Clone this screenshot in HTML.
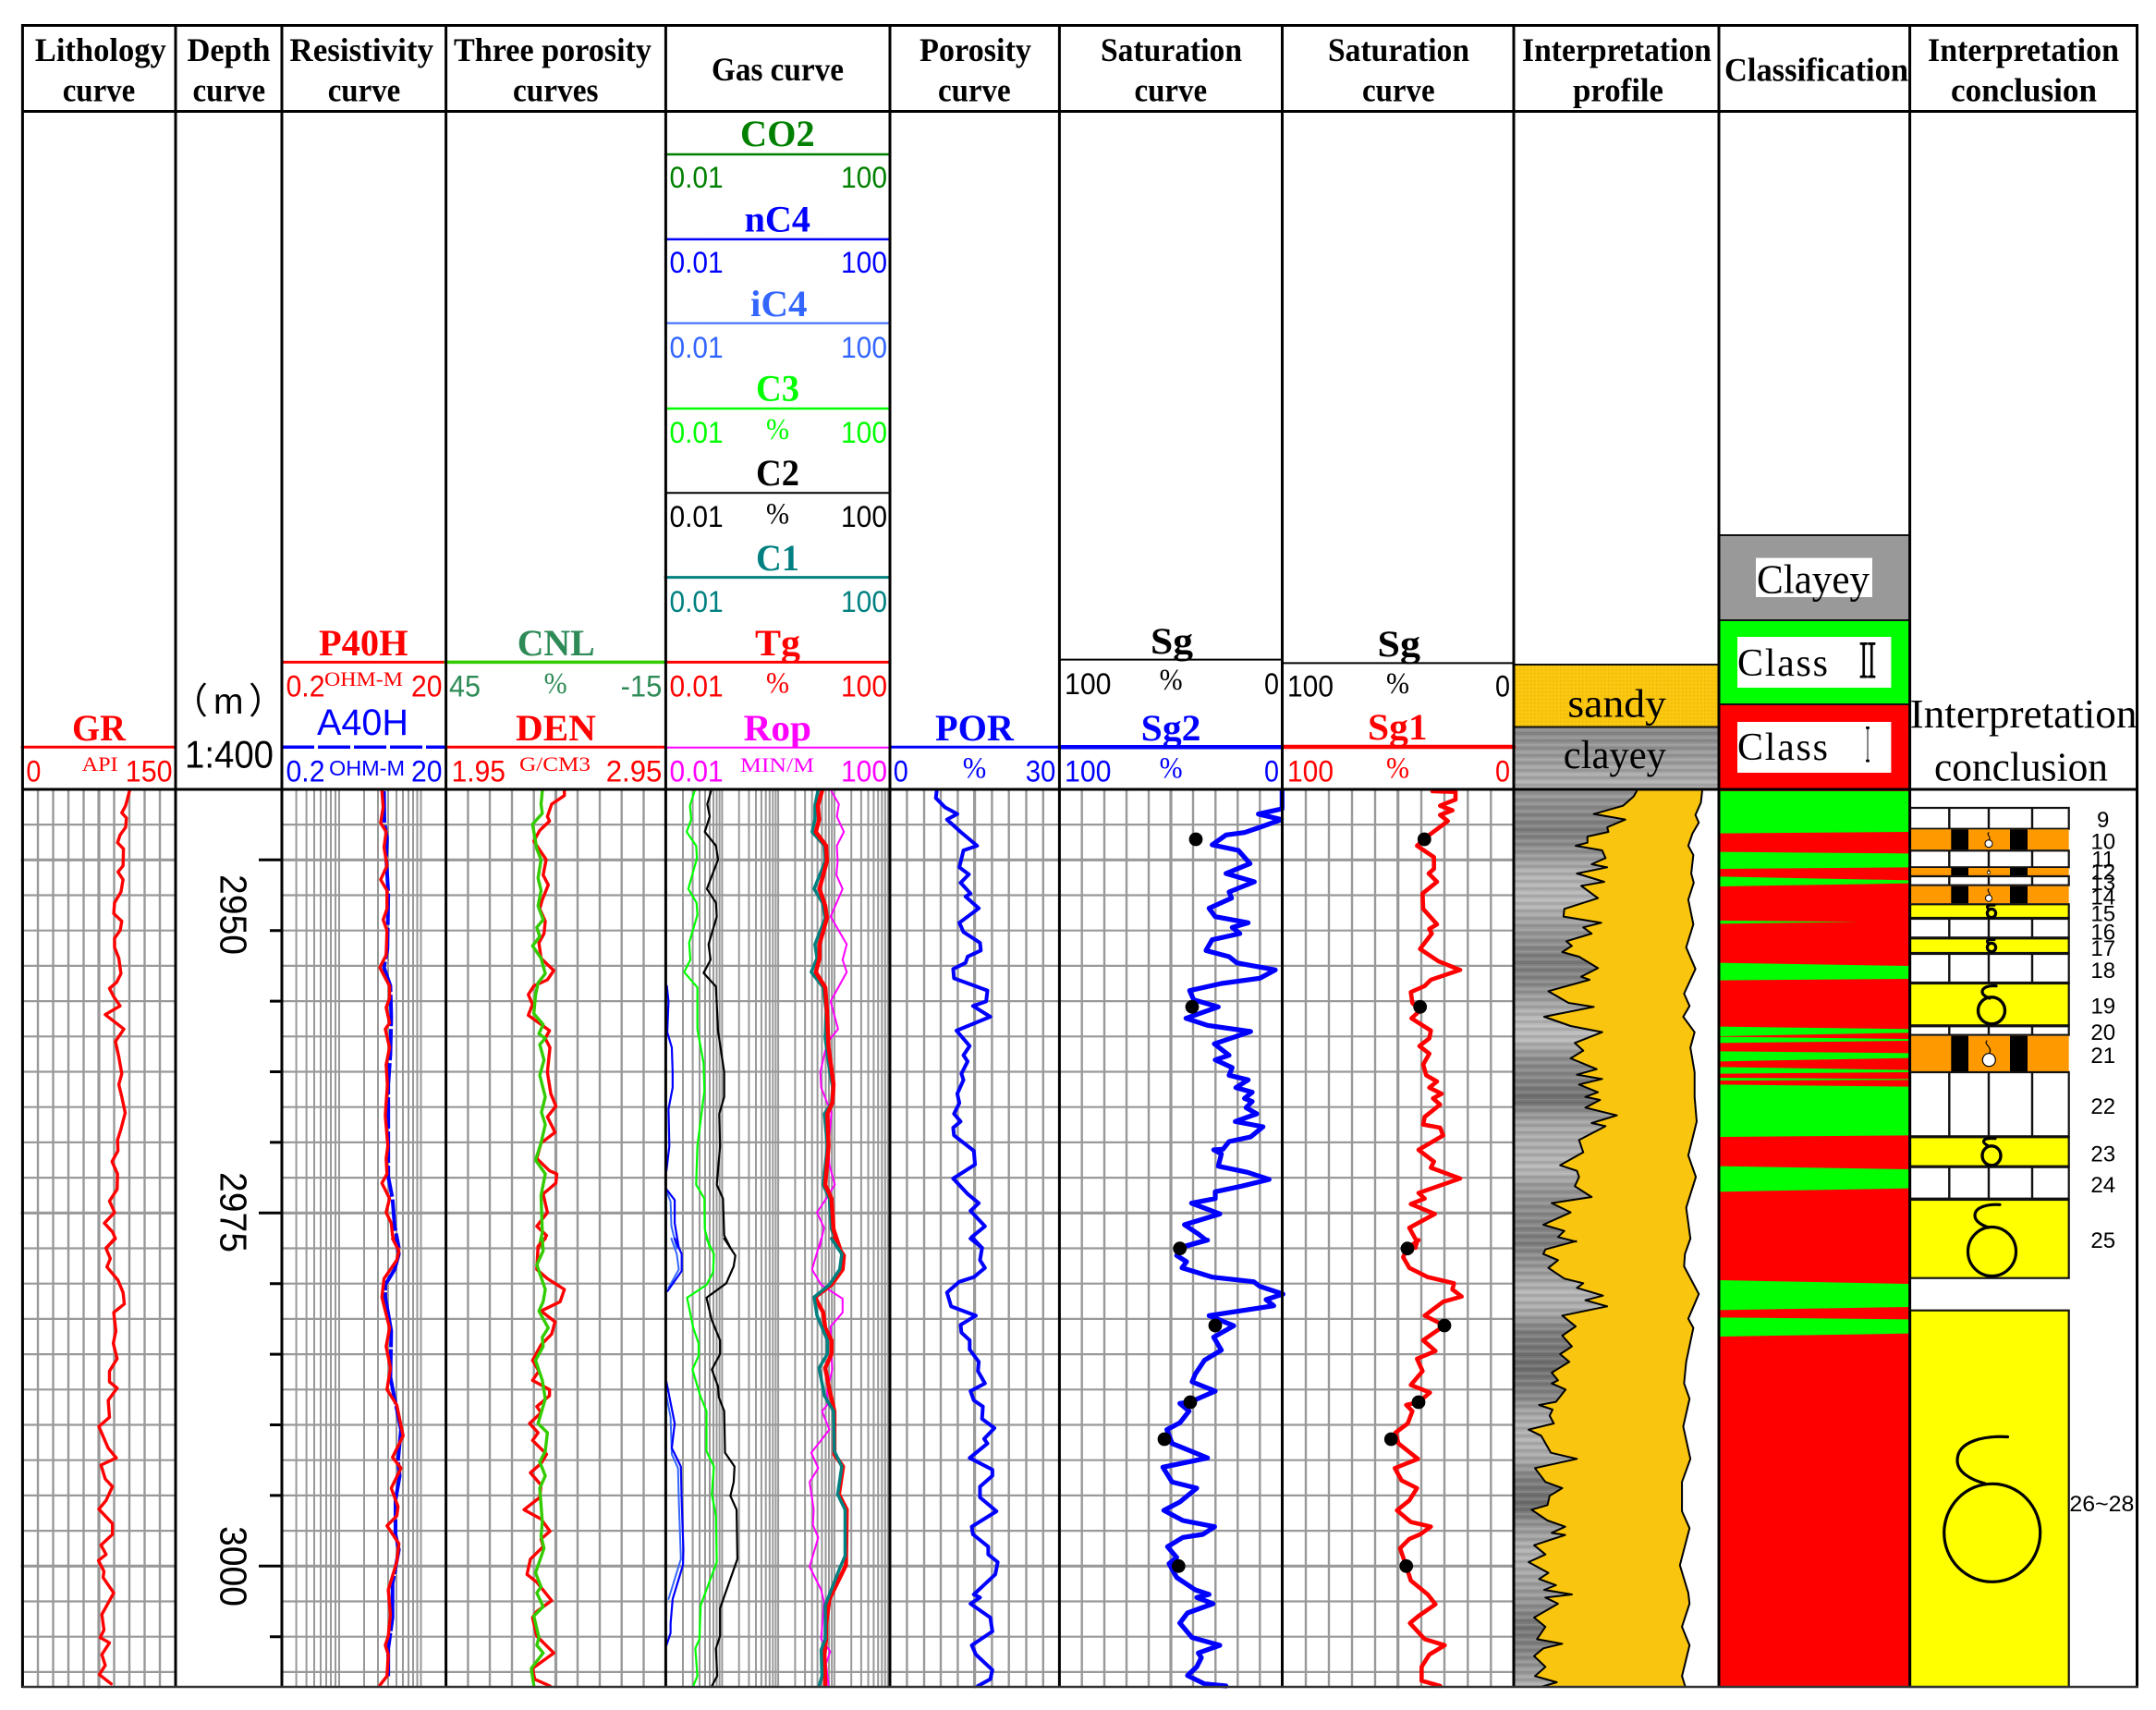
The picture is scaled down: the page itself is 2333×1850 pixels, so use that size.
<!DOCTYPE html>
<html><head><meta charset="utf-8"><style>
html,body{margin:0;padding:0;background:#fff}
svg{display:block}
text{white-space:pre}
.h{font:bold 35.5px "Liberation Serif",serif}
.l{font:bold 40px "Liberation Serif",serif}
.n{font:32.5px "Liberation Sans",sans-serif}
.u{font:22px "Liberation Serif",serif}
.p{font:33px "Liberation Serif",serif}
.c{font:24px "Liberation Sans",sans-serif;text-anchor:middle}
.i{font:44px "Liberation Serif",serif}
path{vector-effect:non-scaling-stroke;stroke-linejoin:round;stroke-linecap:round}
.cv{fill:none}
</style></head><body>
<svg xmlns="http://www.w3.org/2000/svg" width="2333" height="1850" viewBox="0 0 2333 1850">
<defs>
<linearGradient id="g2" gradientUnits="userSpaceOnUse" x1="0" y1="0" x2="0" y2="2000">
<stop offset=".427" stop-color="#9a9a9a"/><stop offset=".44" stop-color="#8a8a8a"/><stop offset=".45" stop-color="#808080"/><stop offset=".4625" stop-color="#999"/><stop offset=".4725" stop-color="#b4b4b4"/><stop offset=".49" stop-color="#b8b8b8"/><stop offset=".495" stop-color="#a8a8a8"/><stop offset=".51" stop-color="#909090"/><stop offset=".52" stop-color="#7e7e7e"/><stop offset=".53" stop-color="#888"/><stop offset=".5425" stop-color="#a5a5a5"/><stop offset=".55" stop-color="#b8b8b8"/><stop offset=".5625" stop-color="#bbb"/><stop offset=".5725" stop-color="#909090"/><stop offset=".585" stop-color="#858585"/><stop offset=".595" stop-color="#707070"/><stop offset=".6" stop-color="#8c8c8c"/><stop offset=".6075" stop-color="#a8a8a8"/><stop offset=".62" stop-color="#b0b0b0"/><stop offset=".6325" stop-color="#b8b8b8"/><stop offset=".6425" stop-color="#9a9a9a"/><stop offset=".66" stop-color="#888"/><stop offset=".6725" stop-color="#808080"/><stop offset=".685" stop-color="#999"/><stop offset=".7" stop-color="#b8b8b8"/><stop offset=".71" stop-color="#aaa"/><stop offset=".72" stop-color="#808080"/><stop offset=".74" stop-color="#707070"/><stop offset=".755" stop-color="#888"/><stop offset=".765" stop-color="#aaa"/><stop offset=".78" stop-color="#b4b4b4"/><stop offset=".79" stop-color="#a8a8a8"/><stop offset=".8" stop-color="#808080"/><stop offset=".815" stop-color="#6e6e6e"/><stop offset=".825" stop-color="#999"/><stop offset=".84" stop-color="#b4b4b4"/><stop offset=".85" stop-color="#aaa"/><stop offset=".865" stop-color="#999"/><stop offset=".88" stop-color="#777"/><stop offset=".895" stop-color="#8a8a8a"/><stop offset=".9125" stop-color="#b0b0b0"/>
</linearGradient>
<linearGradient id="g3" gradientUnits="userSpaceOnUse" x1="0" y1="787" x2="0" y2="854">
<stop offset="0" stop-color="#8a8a8a"/><stop offset=".4" stop-color="#9a9a9a"/><stop offset="1" stop-color="#b4b4b4"/>
</linearGradient>
<pattern id="st" width="10" height="8" patternUnits="userSpaceOnUse"><rect width="10" height="3" fill="#000" opacity=".09"/><rect y="5" width="10" height="1.5" fill="#fff" opacity=".12"/></pattern>
<pattern id="yl" width="4" height="4" patternUnits="userSpaceOnUse"><rect width="4" height="4" fill="#fcc80e"/><rect width="1.5" height="1.5" fill="#d8a60c"/></pattern>
</defs>

<rect width="2333" height="1850" fill="#fff"/>

<!-- grid -->
<path fill="none" stroke="#999" stroke-width="2.2" d="M24 892.1H1638M24 968.5H1638M24 1006.7H1638M24 1044.9H1638M24 1083.1H1638M24 1121.3H1638M24 1159.5H1638M24 1197.7H1638M24 1235.9H1638M24 1274.1H1638M24 1350.5H1638M24 1388.7H1638M24 1426.9H1638M24 1465.1H1638M24 1503.3H1638M24 1541.5H1638M24 1579.7H1638M24 1617.9H1638M24 1656.1H1638M24 1732.5H1638M24 1770.7H1638M24 1808.9H1638"/>
<path fill="none" stroke="#999" stroke-width="3.2" d="M24 930.3H1638M24 1312.3H1638M24 1694.3H1638"/>
<rect x="190" y="855" width="115" height="970" fill="#fff"/>
<path fill="none" stroke="#999" stroke-width="2.4" d="M41 854V1825M57.5 854V1825M74 854V1825M90.5 854V1825M123.5 854V1825M140 854V1825M156.5 854V1825M173 854V1825
M506.4 854V1825M530 854V1825M554 854V1825M577.7 854V1825M625 854V1825M649 854V1825M672.7 854V1825M696.5 854V1825
M981.4 854V1825M1000 854V1825M1018 854V1825M1036.4 854V1825M1073.4 854V1825M1091.7 854V1825M1110.5 854V1825M1128.8 854V1825
M1170.7 854V1825M1195 854V1825M1219 854V1825M1243 854V1825M1291 854V1825M1315.3 854V1825M1339.3 854V1825M1363.3 854V1825
M1413 854V1825M1438 854V1825M1463 854V1825M1488 854V1825M1538 854V1825M1563 854V1825M1588.3 854V1825M1613.3 854V1825"/>
<path fill="none" stroke="#999" stroke-width="3.2" d="M107 854V1825M601.5 854V1825M1054.6 854V1825M1267 854V1825M1512.7 854V1825"/>
<path fill="none" stroke="#999" stroke-width="2" d="M320.6 854V1825M331.6 854V1825M340 854V1825M347 854V1825M353 854V1825M358 854V1825M363 854V1825M367 854V1825M394 854V1825M409 854V1825M420 854V1825M429 854V1825M436 854V1825M442 854V1825M447 854V1825M451.5 854V1825M455.5 854V1825
M739 854V1825M749.6 854V1825M757 854V1825M763 854V1825M768 854V1825M772 854V1825M775.5 854V1825M778.6 854V1825M781.4 854V1825M799.7 854V1825M810.4 854V1825M818 854V1825M823.9 854V1825M828.7 854V1825M832.8 854V1825M836.3 854V1825M839.4 854V1825M842.1 854V1825M860.4 854V1825M871.1 854V1825M878.7 854V1825M884.6 854V1825M889.4 854V1825M893.5 854V1825M897 854V1825M900.1 854V1825M902.9 854V1825M921.2 854V1825M931.9 854V1825M939.5 854V1825M945.4 854V1825M950.2 854V1825M954.3 854V1825M957.8 854V1825M960.9 854V1825"/>

<!-- profile track: gray base, yellow over it, white at right -->
<rect x="1638" y="854" width="222" height="971" fill="url(#g2)"/>
<rect x="1638" y="854" width="222" height="971" fill="url(#st)"/>
<g transform="translate(1620 840) scale(.45472 .33333)">
<path fill="url(#yl)" style="fill:#f9c50f" d="M332 40 L325 65 L300 95 L230 122 L305 140 L262 165 L265 180 L215 195 L215 215 L187 225 L250 240 L258 265 L225 285 L262 295 L190 315 L255 342 L200 355 L240 395 L160 430 L158 455 L248 475 L205 490 L225 510 L165 535 L178 550 L155 570 L195 585 L240 622 L200 650 L220 660 L122 697 L170 735 L230 748 L112 780 L175 810 L250 830 L185 865 L205 890 L175 915 L237 950 L190 968 L250 982 L195 1000 L240 1025 L210 1040 L245 1050 L210 1075 L285 1100 L225 1125 L258 1135 L195 1180 L205 1220 L150 1262 L190 1280 L195 1300 L185 1330 L225 1365 L130 1385 L175 1415 L110 1455 L160 1475 L145 1495 L188 1510 L165 1530 L530 1530 L530 40Z"/>
<path fill="#fff" d="M488 40 L485 85 L472 125 L480 150 L465 185 L455 225 L467 255 L462 315 L468 345 L455 400 L467 480 L450 555 L472 625 L445 705 L458 745 L443 780 L470 830 L460 880 L470 960 L470 1040 L475 1120 L455 1230 L473 1300 L450 1400 L460 1530 L530 1530 L530 40Z"/>
</g>
<g transform="translate(1620 1340) scale(.45472 .33333)">
<path style="fill:#f9c50f" d="M188 0 L188 8 L115 35 L110 50 L145 70 L122 95 L160 130 L205 145 L190 160 L252 185 L210 200 L262 220 L155 250 L187 285 L155 315 L178 350 L150 375 L172 400 L130 435 L145 460 L130 470 L163 490 L140 530 L100 540 L132 555 L125 575 L135 600 L75 620 L105 640 L128 695 L190 715 L90 745 L115 790 L155 810 L125 835 L120 865 L82 880 L120 915 L162 935 L130 955 L162 962 L88 995 L115 1025 L75 1050 L122 1085 L100 1105 L140 1125 L112 1140 L178 1155 L115 1165 L145 1185 L88 1230 L115 1260 L95 1300 L155 1315 L110 1330 L88 1355 L115 1390 L90 1420 L142 1440 L105 1455 L530 1455 L530 0Z"/>
<path fill="#fff" d="M460 0 L447 50 L445 90 L480 180 L455 260 L467 290 L450 400 L445 470 L458 520 L443 610 L460 715 L440 790 L440 885 L458 940 L435 1060 L455 1150 L458 1185 L440 1260 L458 1320 L440 1420 L448 1455 L530 1455 L530 0Z"/>
</g>
<g transform="translate(1620 840) scale(.45472 .33333)" fill="none" stroke="#000" stroke-width="2">
<path d="M332 48 L325 65 L300 95 L230 122 L305 140 L262 165 L265 180 L215 195 L215 215 L187 225 L250 240 L258 265 L225 285 L262 295 L190 315 L255 342 L200 355 L240 395 L160 430 L158 455 L248 475 L205 490 L225 510 L165 535 L178 550 L155 570 L195 585 L240 622 L200 650 L220 660 L122 697 L170 735 L230 748 L112 780 L175 810 L250 830 L185 865 L205 890 L175 915 L237 950 L190 968 L250 982 L195 1000 L240 1025 L210 1040 L245 1050 L210 1075 L285 1100 L225 1125 L258 1135 L195 1180 L205 1220 L150 1262 L190 1280 L195 1300 L185 1330 L225 1365 L130 1385 L175 1415 L110 1455 L160 1475 L145 1495 L188 1510"/>
<path d="M488 48 L485 85 L472 125 L480 150 L465 185 L455 225 L467 255 L462 315 L468 345 L455 400 L467 480 L450 555 L472 625 L445 705 L458 745 L443 780 L470 830 L460 880 L470 960 L470 1040 L475 1120 L455 1230 L473 1300 L450 1400 L460 1500"/>
</g>
<g transform="translate(1620 1340) scale(.45472 .33333)" fill="none" stroke="#000" stroke-width="2">
<path d="M188 8 L115 35 L110 50 L145 70 L122 95 L160 130 L205 145 L190 160 L252 185 L210 200 L262 220 L155 250 L187 285 L155 315 L178 350 L150 375 L172 400 L130 435 L145 460 L130 470 L163 490 L140 530 L100 540 L132 555 L125 575 L135 600 L75 620 L105 640 L128 695 L190 715 L90 745 L115 790 L155 810 L125 835 L120 865 L82 880 L120 915 L162 935 L130 955 L162 962 L88 995 L115 1025 L75 1050 L122 1085 L100 1105 L140 1125 L112 1140 L178 1155 L115 1165 L145 1185 L88 1230 L115 1260 L95 1300 L155 1315 L110 1330 L88 1355 L115 1390 L90 1420 L142 1440 L105 1455"/>
<path d="M460 0 L447 50 L445 90 L480 180 L455 260 L467 290 L450 400 L445 470 L458 520 L443 610 L460 715 L440 790 L440 885 L458 940 L435 1060 L455 1150 L458 1185 L440 1260 L458 1320 L440 1420 L448 1455"/>
</g>

<!-- classification track -->
<rect x="1860" y="854" width="206.6" height="971" fill="#f00"/>
<g transform="translate(1620 840) scale(.45472 .33333)" fill="#0f0">
<path d="M530 48H980V180L530 185Z"/>
<path d="M530 245L980 250V295L530 300Z"/>
<path d="M530 325L980 337V347L530 357Z"/>
<path d="M530 468L860 472L530 478Z"/>
<path d="M530 605L980 615V657L530 662Z"/>
<path d="M530 812L980 820V832L530 843Z"/>
<path d="M530 845L980 852V858L530 865Z"/>
<path d="M530 892L980 898V914L530 925Z"/>
<path d="M530 943L980 953V960L530 965Z"/>
<path d="M530 978L980 982V985L530 987Z"/>
<path d="M530 1000L980 1007V1165L530 1170Z"/>
<path d="M530 1265L980 1275V1337L530 1348Z"/>
</g>
<g transform="translate(1620 1340) scale(.45472 .33333)" fill="#0f0">
<path d="M530 135L980 147V222L530 232Z"/>
<path d="M530 256L980 262V308L530 318Z"/>
</g>

<!-- depth ticks -->
<path fill="none" stroke="#000" stroke-width="3" style="stroke-linecap:butt" d="M280 930.3H305M292 1006.7H305M292 1083.1H305M292 1159.5H305M292 1235.9H305M280 1312.3H305M292 1388.7H305M292 1465.1H305M292 1541.5H305M292 1617.9H305M280 1694.3H305M292 1770.7H305"/>
<text class="n" style="font-size:41px" transform="translate(238.5 946) rotate(90)" textLength="87" lengthAdjust="spacingAndGlyphs">2950</text>
<text class="n" style="font-size:41px" transform="translate(238.5 1268) rotate(90)" textLength="87" lengthAdjust="spacingAndGlyphs">2975</text>
<text class="n" style="font-size:41px" transform="translate(238.5 1651) rotate(90)" textLength="87" lengthAdjust="spacingAndGlyphs">3000</text>

<!-- curves upper half -->
<g transform="translate(0 840) scale(.45918 .33333)">
<path class="cv" stroke="#f00" stroke-width="3.4" d="M305 48 L300 75 L296 95 L287 118 L298 135 L296 165 L283 190 L277 215 L291 235 L290 290 L278 310 L290 335 L285 375 L270 410 L268 445 L287 470 L283 500 L270 525 L270 555 L280 590 L285 640 L275 668 L258 688 L268 715 L283 745 L248 773 L292 820 L272 860 L280 910 L287 965 L280 1000 L287 1040 L295 1092 L285 1145 L277 1180 L278 1215 L264 1250 L277 1290 L276 1340 L258 1378 L270 1415 L246 1450 L265 1478 L272 1500 L250 1530"/>
<path class="cv" stroke="#00f" stroke-width="4" stroke-dasharray="34 3" style="stroke-linecap:butt" d="M905 48 L906 150 L912 200 L910 260 L915 380 L913 560 L905 620 L920 680 L922 780 L920 900 L915 1000 L915 1250 L915 1300 L925 1370 L930 1460 L940 1530"/>
<path class="cv" stroke="#f00" stroke-width="3.4" d="M900 48 L903 100 L897 150 L910 180 L905 230 L912 290 L897 335 L912 370 L912 430 L903 465 L912 500 L910 580 L895 620 L918 680 L918 720 L910 750 L918 800 L908 820 L918 880 L910 935 L913 1000 L908 1100 L914 1200 L910 1240 L912 1290 L900 1320 L918 1370 L910 1415 L922 1450 L925 1490 L938 1530"/>
<path class="cv" stroke="#f00" stroke-width="3.4" d="M1330 48 L1330 62 L1300 90 L1290 130 L1295 145 L1272 175 L1258 210 L1270 235 L1287 270 L1280 320 L1292 352 L1278 400 L1272 430 L1285 470 L1282 510 L1270 540 L1275 590 L1305 630 L1290 660 L1258 680 L1245 708 L1255 740 L1245 775 L1270 800 L1295 825 L1285 850 L1296 880 L1290 960 L1298 1030 L1310 1070 L1290 1105 L1308 1155 L1275 1190 L1265 1240 L1295 1280 L1312 1290 L1310 1320 L1280 1355 L1290 1415 L1265 1460 L1288 1490 L1270 1530"/>
<path class="cv" stroke="#33cc00" stroke-width="3.4" d="M1278 48 L1275 90 L1278 120 L1255 155 L1265 235 L1275 270 L1268 330 L1275 370 L1268 420 L1280 465 L1265 490 L1272 520 L1255 550 L1275 590 L1285 640 L1268 670 L1262 710 L1258 770 L1280 805 L1270 835 L1285 850 L1272 870 L1282 920 L1272 970 L1285 1040 L1276 1090 L1285 1130 L1275 1190 L1262 1245 L1285 1290 L1275 1360 L1278 1480 L1270 1530"/>
</g>
<g transform="translate(0 1340) scale(.45918 .33333)">
<path class="cv" stroke="#f00" stroke-width="3.4" d="M270 0 L250 32 L260 65 L252 92 L278 135 L290 175 L293 212 L268 240 L273 300 L267 340 L276 390 L258 430 L258 465 L276 485 L255 525 L258 580 L233 610 L255 680 L274 712 L238 735 L248 780 L265 805 L250 850 L233 878 L265 925 L265 960 L238 995 L250 1025 L232 1045 L245 1080 L243 1100 L268 1150 L240 1220 L245 1270 L236 1295 L258 1312 L240 1350 L248 1385 L234 1415 L262 1445"/>
<path class="cv" stroke="#00f" stroke-width="4" stroke-dasharray="60 2" style="stroke-linecap:butt" d="M932 0 L940 50 L930 100 L908 150 L908 190 L922 300 L920 450 L930 520 L945 620 L938 720 L942 770 L932 850 L932 960 L940 1010 L925 1120 L925 1230 L915 1330 L915 1420"/>
<path class="cv" stroke="#f00" stroke-width="3.4" d="M925 0 L940 40 L935 70 L905 130 L900 190 L918 290 L910 350 L920 420 L912 490 L935 540 L950 640 L925 710 L945 745 L922 810 L938 870 L935 900 L912 932 L940 990 L935 1050 L915 1140 L920 1220 L915 1290 L908 1320 L915 1350 L912 1420 L895 1450"/>
<path class="cv" stroke="#f00" stroke-width="3.4" d="M1285 0 L1268 25 L1265 100 L1290 130 L1330 165 L1320 205 L1275 235 L1308 270 L1300 310 L1275 345 L1255 395 L1270 430 L1255 460 L1295 490 L1295 510 L1265 545 L1275 565 L1248 600 L1268 630 L1255 655 L1288 700 L1275 730 L1250 760 L1275 800 L1272 840 L1235 880 L1275 910 L1296 950 L1275 975 L1280 1000 L1250 1040 L1242 1090 L1265 1115 L1300 1175 L1265 1210 L1255 1230 L1265 1290 L1305 1345 L1255 1395 L1260 1430 L1296 1452"/>
<path class="cv" stroke="#33cc00" stroke-width="3.4" d="M1278 0 L1280 40 L1265 85 L1285 165 L1280 205 L1270 235 L1292 290 L1278 320 L1280 350 L1262 395 L1278 460 L1285 520 L1268 600 L1290 630 L1285 690 L1272 725 L1285 770 L1272 810 L1278 920 L1275 965 L1282 1005 L1262 1085 L1275 1130 L1265 1150 L1280 1195 L1258 1225 L1270 1295 L1265 1320 L1280 1345 L1252 1395 L1258 1450"/>
</g>

<!-- gas + porosity zoom 6/7 -->
<g transform="translate(710 840) scale(.44643 .33333)">
<path class="cv" stroke="#3366ff" stroke-width="2" d="M25 1345 L35 1380 L37 1460 L50 1530"/>
<path class="cv" stroke="#00f" stroke-width="2.2" d="M26 680 L30 730 L27 830 L38 880 L40 960 L40 1010 L30 1080 L32 1200 L25 1280M25 1340 L45 1375 L45 1450 L55 1530"/>
<path class="cv" stroke="#0f0" stroke-width="2.2" d="M93 48 L82 95 L85 140 L74 180 L97 225 L99 265 L78 365 L98 410 L100 450 L80 540 L83 595 L68 635 L100 685 L100 820 L115 930 L117 1020 L100 1200 L97 1325 L117 1370 L118 1470 L130 1530"/>
<path class="cv" stroke="#000" stroke-width="2.2" d="M133 48 L124 90 L130 130 L118 180 L145 225 L150 270 L123 365 L145 410 L147 455 L127 545 L132 595 L115 638 L145 682 L150 825 L165 960 L165 1040 L153 1095 L155 1200 L147 1325 L162 1370 L165 1490 L180 1530"/>
<path class="cv" stroke="#f0f" stroke-width="2" d="M425 48 L443 90 L438 130 L455 180 L438 225 L440 275 L437 320 L452 365 L423 455 L462 545 L452 595 L462 635 L423 730 L441 820 L420 855 L410 890 L398 960 L400 1010 L415 1060 L425 1090 L418 1200 L420 1260 L433 1325 L410 1375 L390 1415 L407 1465 L396 1530"/>
<path class="cv" stroke="#008080" stroke-width="3.5" d="M392 48 L385 95 L385 140 L378 180 L408 225 L410 275 L383 365 L403 410 L410 460 L385 545 L390 590 L376 635 L405 685 L412 760 L410 850 L420 950 L428 1010 L425 1060 L408 1095 L415 1200 L405 1325 L420 1370 L425 1470 L445 1530"/>
<path class="cv" stroke="#f00" stroke-width="4.5" d="M402 48 L392 95 L395 140 L387 180 L412 225 L414 275 L396 365 L410 420 L414 460 L396 545 L396 590 L387 635 L410 685 L414 760 L418 880 L430 1000 L427 1060 L415 1095 L418 1200 L410 1325 L425 1370 L430 1470 L445 1530"/>
<path class="cv" stroke="#00f" stroke-width="4" d="M680 48 L678 70 L700 100 L730 122 L705 140 L738 180 L778 225 L745 240 L735 295 L758 318 L738 345 L762 380 L750 390 L782 428 L735 475 L745 505 L785 540 L787 565 L755 585 L750 605 L720 625 L722 655 L803 695 L800 730 L768 745 L810 780 L728 825 L760 875 L745 905 L755 925 L740 965 L745 985 L730 1030 L735 1060 L722 1095 L738 1120 L720 1140 L722 1165 L770 1215 L773 1260 L720 1305 L755 1355 L782 1385 L762 1410 L797 1460 L765 1495 L790 1530"/>
</g>
<g transform="translate(710 1340) scale(.44643 .33333)">
<path class="cv" stroke="#3366ff" stroke-width="2" d="M37 0 L50 50 L55 100 L30 160M25 510 L35 580 L38 700 L53 745 L55 850 L60 1040 L30 1170"/>
<path class="cv" stroke="#00f" stroke-width="2.2" d="M45 0 L62 50 L62 105 L28 170M25 465 L45 600 L38 680 L60 740 L62 850 L66 1010 L65 1060 L40 1170 L35 1250 L35 1280 L25 1320"/>
<path class="cv" stroke="#0f0" stroke-width="2.2" d="M122 0 L140 50 L138 110 L122 150 L75 192 L90 290 L103 340 L103 380 L88 425 L107 510 L122 560 L122 690 L140 740 L135 830 L145 900 L147 1050 L108 1190 L105 1300 L95 1330 L100 1420 L90 1452"/>
<path class="cv" stroke="#000" stroke-width="2.2" d="M165 0 L192 55 L188 90 L170 145 L122 192 L135 265 L155 330 L155 375 L135 425 L150 480 L152 515 L165 560 L167 695 L190 740 L188 790 L180 835 L195 880 L197 1040 L155 1200 L155 1290 L145 1330 L148 1420 L135 1452"/>
<path class="cv" stroke="#f0f" stroke-width="2" d="M400 0 L378 100 L400 150 L452 195 L452 240 L423 285 L425 380 L427 425 L415 490 L415 540 L402 560 L420 620 L376 695 L393 745 L372 790 L382 880 L380 930 L393 970 L372 1065 L400 1140 L407 1180 L400 1300 L422 1340 L412 1380 L418 1452"/>
<path class="cv" stroke="#f00" stroke-width="4.5" d="M428 0 L455 55 L452 100 L425 150 L385 190 L405 240 L410 290 L425 330 L425 375 L410 420 L420 490 L432 560 L432 700 L453 740 L443 830 L462 880 L460 1060 L420 1170 L412 1250 L412 1300 L408 1350 L410 1452"/>
<path class="cv" stroke="#008080" stroke-width="3.5" d="M425 0 L450 50 L445 100 L420 150 L383 190 L390 250 L415 330 L415 375 L395 420 L408 510 L430 560 L432 690 L450 740 L440 830 L458 880 L458 1030 L445 1070 L410 1190 L410 1300 L400 1335 L402 1420 L395 1452"/>
<path class="cv" stroke="#00f" stroke-width="4" d="M762 0 L790 30 L785 70 L797 95 L770 125 L735 140 L705 175 L715 220 L775 250 L738 280 L740 305 L760 330 L760 360 L782 400 L780 430 L797 470 L762 495 L770 525 L792 545 L790 585 L820 615 L795 650 L803 665 L760 712 L815 750 L815 770 L785 805 L785 840 L825 885 L765 935 L768 960 L805 1000 L805 1025 L828 1050 L822 1090 L790 1130 L770 1155 L785 1165 L762 1185 L810 1230 L815 1275 L765 1320 L775 1350 L815 1400 L810 1430 L780 1452"/>
</g>

<!-- Sg curves -->
<g transform="translate(1130 840) scale(.33333)">
<path class="cv" stroke="#00f" stroke-width="5.2" d="M772 48 L772 105 L695 122 L770 140 L700 165 L650 182 L590 190 L545 222 L630 240 L668 283 L590 315 L682 342 L600 375 L608 395 L535 428 L555 455 L662 475 L610 490 L635 510 L545 530 L525 565 L600 585 L625 605 L750 628 L700 655 L575 672 L472 695 L485 725 L565 748 L460 785 L530 808 L670 828 L552 868 L600 905 L555 920 L610 945 L600 970 L662 985 L622 1010 L675 1025 L650 1045 L675 1055 L655 1075 L690 1095 L620 1120 L710 1137 L670 1170 L600 1185 L580 1210 L550 1212 L575 1225 L565 1265 L660 1285 L730 1308 L640 1330 L555 1348 L555 1370 L478 1385 L570 1420 L455 1455 L500 1485 L525 1505 L455 1525"/>
<path class="cv" stroke="#f00" stroke-width="4.6" d="M1260 48 L1335 50 L1335 75 L1285 95 L1325 110 L1285 125 L1310 145 L1250 190 L1210 225 L1265 262 L1265 300 L1248 315 L1275 342 L1228 380 L1230 430 L1275 480 L1250 495 L1258 510 L1220 560 L1280 600 L1350 628 L1255 660 L1235 680 L1190 700 L1195 735 L1220 760 L1192 785 L1255 825 L1250 850 L1218 875 L1250 900 L1230 935 L1240 970 L1275 990 L1250 1010 L1290 1030 L1262 1045 L1285 1065 L1235 1105 L1230 1130 L1285 1140 L1295 1165 L1215 1212 L1265 1250 L1255 1270 L1350 1305 L1215 1352 L1235 1370 L1190 1388 L1268 1420 L1185 1465 L1210 1510 L1205 1530"/>
</g>
<g transform="translate(1130 1340) scale(.33333)">
<path class="cv" stroke="#00f" stroke-width="5.2" d="M530 5 L440 30 L430 55 L462 75 L447 95 L545 125 L680 140 L700 155 L775 180 L720 198 L745 218 L535 250 L615 283 L550 320 L575 362 L520 395 L490 440 L480 465 L555 495 L475 530 L440 535 L470 560 L440 598 L398 620 L415 665 L530 712 L385 742 L415 790 L495 810 L440 855 L388 882 L450 915 L553 935 L515 960 L450 970 L400 1000 L430 1035 L405 1055 L430 1100 L490 1140 L535 1155 L495 1165 L548 1185 L465 1215 L440 1248 L480 1295 L570 1320 L500 1345 L510 1360 L495 1390 L465 1418 L520 1445 L590 1452"/>
<path class="cv" stroke="#f00" stroke-width="4.6" d="M1215 5 L1179 32 L1165 60 L1185 95 L1245 125 L1330 145 L1325 165 L1355 188 L1295 205 L1235 250 L1299 282 L1230 330 L1270 365 L1210 390 L1228 430 L1190 475 L1252 500 L1215 531 L1175 540 L1195 560 L1180 600 L1140 630 L1150 665 L1213 715 L1138 745 L1160 785 L1210 810 L1185 850 L1145 882 L1190 920 L1255 935 L1220 960 L1185 975 L1155 1005 L1175 1063 L1190 1110 L1245 1155 L1270 1187 L1215 1225 L1187 1248 L1235 1300 L1300 1320 L1250 1350 L1225 1390 L1225 1435 L1285 1452"/>
</g>
<g fill="#000">
<circle cx="1294" cy="908" r="7.4"/><circle cx="1290" cy="1089.3" r="7.4"/><circle cx="1276.7" cy="1350.7" r="7.4"/><circle cx="1315" cy="1434" r="7.4"/><circle cx="1288" cy="1517" r="7.4"/><circle cx="1260" cy="1557" r="7.4"/><circle cx="1275.3" cy="1694.3" r="7.4"/>
<circle cx="1541.3" cy="908" r="7.4"/><circle cx="1536.7" cy="1089.3" r="7.4"/><circle cx="1523" cy="1350.7" r="7.4"/><circle cx="1563" cy="1434" r="7.4"/><circle cx="1535" cy="1517" r="7.4"/><circle cx="1505.3" cy="1557" r="7.4"/><circle cx="1521.7" cy="1694.3" r="7.4"/>
</g>

<!-- conclusion blocks -->
<g stroke="#111" stroke-width="2.2">
<rect x="2067" y="874" width="171.7" height="22.7" fill="#fff"/>
<rect x="2067" y="897.3" width="171.7" height="22" fill="#ff9900" stroke="none"/>
<rect x="2067" y="920.3" width="171.7" height="18" fill="#fff"/>
<rect x="2067" y="939" width="171.7" height="8" fill="#ff9900" stroke="none"/>
<rect x="2067" y="948" width="171.7" height="9.7" fill="#fff"/>
<rect x="2067" y="958.7" width="171.7" height="18.6" fill="#ff9900" stroke="none"/>
<rect x="2067" y="978.3" width="171.7" height="14.7" fill="#ff0"/>
<rect x="2067" y="994" width="171.7" height="20.3" fill="#fff"/>
<rect x="2067" y="1015.3" width="171.7" height="15.7" fill="#ff0"/>
<rect x="2067" y="1032" width="171.7" height="31" fill="#fff"/>
<rect x="2067" y="1064" width="171.7" height="45.3" fill="#ff0"/>
<rect x="2067" y="1110.3" width="171.7" height="9.4" fill="#fff"/>
<rect x="2067" y="1120.7" width="171.7" height="38.6" fill="#ff9900" stroke="none"/>
<rect x="2067" y="1160" width="171.7" height="69.3" fill="#fff"/>
<rect x="2067" y="1230.3" width="171.7" height="31.4" fill="#ff0"/>
<rect x="2067" y="1262.7" width="171.7" height="34" fill="#fff"/>
<rect x="2067" y="1298" width="171.7" height="84.7" fill="#ff0"/>
<rect x="2067" y="1417.7" width="171.7" height="407.3" fill="#ff0"/>
</g>
<path fill="none" stroke="#111" stroke-width="2.4" style="stroke-linecap:butt" d="M2109.3 874V896.7M2152 874V896.7M2199 874V896.7M2109.3 920.3V938.3M2152 920.3V938.3M2199 920.3V938.3M2109.3 948V957.7M2152 948V957.7M2199 948V957.7M2109.3 994V1014.3M2152 994V1014.3M2199 994V1014.3M2109.3 1032V1063M2152 1032V1063M2199 1032V1063M2109.3 1110.3V1119.7M2152 1110.3V1119.7M2199 1110.3V1119.7M2109.3 1160V1229.3M2152 1160V1229.3M2199 1160V1229.3M2109.3 1262.7V1296.7M2152 1262.7V1296.7M2199 1262.7V1296.7"/>
<g fill="#000">
<rect x="2111.3" y="897.3" width="18.7" height="22"/><rect x="2175" y="897.3" width="19" height="22"/>
<rect x="2111.3" y="939" width="18.7" height="8"/><rect x="2175" y="939" width="19" height="8"/>
<rect x="2111.3" y="958.7" width="18.7" height="18.6"/><rect x="2175" y="958.7" width="19" height="18.6"/>
<rect x="2111.3" y="1120.7" width="18.7" height="38.6"/><rect x="2175" y="1120.7" width="19" height="38.6"/>
</g>
<!-- delta symbols -->
<g fill="none" stroke="#000">
<path stroke-width="1.1" d="M2152 900.7C2149 903 2155 905 2152.5 908.7"/><circle cx="2152" cy="912.7" r="4" fill="#fff" stroke-width="1"/>
<circle cx="2152" cy="944" r="1.7" fill="#fff" stroke-width=".8"/><path stroke-width=".8" d="M2152 940V942.5"/>
<path stroke-width="1.1" d="M2152 961.7C2149 964 2155 966 2152.5 969"/><circle cx="2152" cy="971.7" r="3.5" fill="#fff" stroke-width="1"/>
<path stroke-width="1.2" d="M2150 1126C2146 1130 2156 1132 2153 1139"/><circle cx="2152.3" cy="1146.7" r="7" fill="#fff" stroke-width="1.2"/>
<circle cx="2155" cy="988" r="4.6" stroke-width="3.2"/><path stroke-width="3" d="M2158 979.3C2153 978.5 2150 980 2150.5 981.5C2151 983 2152 983.5 2153.3 984"/>
<circle cx="2155" cy="1025" r="4.6" stroke-width="3.2"/><path stroke-width="3" d="M2158 1016.7C2153 1016 2150 1017.5 2150.5 1019C2151 1020.5 2152 1020.8 2153 1021"/>
<circle cx="2155" cy="1093.3" r="14.5" stroke-width="3.4"/><path stroke-width="3.2" d="M2160 1066.7C2152 1066 2145 1068 2145 1073C2145 1076 2149 1078.5 2153 1080"/>
<ellipse cx="2155" cy="1250.3" rx="10" ry="10.5" stroke-width="3.4"/><path stroke-width="3.2" d="M2159 1231.7C2152 1231 2146.5 1232 2146.5 1235C2146.5 1237 2149 1238.5 2152 1240"/>
<ellipse cx="2155.5" cy="1354" rx="26" ry="26.5" stroke-width="3.2"/><path stroke-width="3.2" d="M2164 1303.3C2150 1302.5 2137 1306 2137 1315C2137 1321 2144 1325.5 2152 1328"/>
<ellipse cx="2155.7" cy="1658.3" rx="52" ry="53" stroke-width="3.2"/><path stroke-width="3.2" d="M2172.5 1554.5C2150 1553 2118 1558 2118 1580C2118 1593 2133 1601 2148 1605"/>
</g>
<!-- numbers -->
<text class="c" x="2275.7" y="895">9</text><text class="c" x="2275.7" y="918.3">10</text><text class="c" x="2275.7" y="937.3">11</text><text class="c" x="2275.7" y="951.7">12</text><text class="c" x="2275.7" y="963">13</text><text class="c" x="2275.7" y="978.3">14</text><text class="c" x="2275.7" y="996.7">15</text><text class="c" x="2275.7" y="1016.7">16</text><text class="c" x="2275.7" y="1034">17</text><text class="c" x="2275.7" y="1058">18</text><text class="c" x="2275.7" y="1096.7">19</text><text class="c" x="2275.7" y="1125">20</text><text class="c" x="2275.7" y="1150">21</text><text class="c" x="2275.7" y="1205">22</text><text class="c" x="2275.7" y="1256.7">23</text><text class="c" x="2275.7" y="1290">24</text><text class="c" x="2275.7" y="1350">25</text>
<text class="c" style="text-anchor:start" x="2239.4" y="1635" textLength="70" lengthAdjust="spacingAndGlyphs">26~28</text>

<!-- header legend boxes -->
<rect x="1638" y="719" width="222" height="67" style="fill:#f9c50f"/>
<rect x="1638" y="719" width="222" height="67" fill="url(#yl)" opacity=".5"/>
<rect x="1638" y="787" width="222" height="67" fill="url(#g3)"/>
<rect x="1638" y="787" width="222" height="67" fill="url(#st)"/>
<rect x="1860" y="579" width="206.6" height="92" fill="#999"/>
<rect x="1860" y="671" width="206.6" height="91" fill="#0f0"/>
<rect x="1860" y="762" width="206.6" height="92" fill="#f00"/>
<rect x="1900" y="603.6" width="126" height="42.4" fill="#fff"/>
<rect x="1880" y="689" width="166.4" height="55" fill="#fff"/>
<rect x="1880" y="781" width="166.4" height="55" fill="#fff"/>
<path fill="none" stroke="#111" stroke-width="2" d="M1638 719H1860M1638 786.5H1860M1860 579H2066.6M1860 671H2066.6M1860 762H2066.6"/>

<!-- legend lines -->
<g fill="none" style="stroke-linecap:butt">
<path stroke="#f00" stroke-width="3" d="M24 808.3H190M305 716.4H482M482 808.3H720M720 716.4H963"/>
<path stroke="#f00" stroke-width="4.5" d="M1388 808H1638"/>
<path stroke="#00f" stroke-width="3.5" stroke-dasharray="35 4" style="stroke-linecap:butt" d="M305 808.3H482"/>
<path stroke="#33cc00" stroke-width="3.5" d="M482 716.4H720"/>
<path stroke="#008000" stroke-width="2.5" d="M720 167H963"/>
<path stroke="#00f" stroke-width="2.5" d="M720 258.9H963"/>
<path stroke="#3366ff" stroke-width="2" d="M720 349.6H963"/>
<path stroke="#0f0" stroke-width="2.5" d="M720 442H963"/>
<path stroke="#000" stroke-width="2" d="M720 533.3H963"/>
<path stroke="#008080" stroke-width="3" d="M720 624.6H963"/>
<path stroke="#f0f" stroke-width="2" d="M720 808.8H963"/>
<path stroke="#00f" stroke-width="3" d="M963 808.3H1146"/>
<path stroke="#00f" stroke-width="4.5" d="M1146 808.3H1387"/>
<path stroke="#000" stroke-width="2" d="M1146 713.6H1387M1388 717.4H1638"/>
</g>

<!-- frame -->
<path fill="none" stroke="#000" stroke-width="3" style="stroke-linecap:butt" d="M24 27.5H2312.5M24 120.5H2312.5M24 854H2312.5M24.4 26V1826M190 26V1826M305 26V1826M482.6 26V1826M720.4 26V1826M963 26V1826M1146.4 26V1826M1387.5 26V1826M1638 26V1826M1860 26V1826M2066.6 26V1826M2312.5 26V1826"/>
<path fill="none" stroke="#333" stroke-width="2.5" style="stroke-linecap:butt" d="M24 1825H2314"/>

<!-- header text -->
<text class="h" x="37.8" y="66" textLength="142" lengthAdjust="spacingAndGlyphs">Lithology</text>
<text class="h" x="67.7" y="109.5" textLength="78.6" lengthAdjust="spacingAndGlyphs">curve</text>
<text class="h" x="202.5" y="66" textLength="90" lengthAdjust="spacingAndGlyphs">Depth</text>
<text class="h" x="208.5" y="109.5" textLength="78.6" lengthAdjust="spacingAndGlyphs">curve</text>
<text class="h" x="313.4" y="66" textLength="155.7" lengthAdjust="spacingAndGlyphs">Resistivity</text>
<text class="h" x="354.7" y="109.5" textLength="78.6" lengthAdjust="spacingAndGlyphs">curve</text>
<text class="h" x="491" y="66" textLength="214" lengthAdjust="spacingAndGlyphs">Three porosity</text>
<text class="h" x="555" y="109.5" textLength="92.5" lengthAdjust="spacingAndGlyphs">curves</text>
<text class="h" x="770" y="87" textLength="143" lengthAdjust="spacingAndGlyphs">Gas curve</text>
<text class="h" x="995" y="66" textLength="121" lengthAdjust="spacingAndGlyphs">Porosity</text>
<text class="h" x="1015" y="109.5" textLength="78.6" lengthAdjust="spacingAndGlyphs">curve</text>
<text class="h" x="1191" y="66" textLength="153" lengthAdjust="spacingAndGlyphs">Saturation</text>
<text class="h" x="1227.5" y="109.5" textLength="78.6" lengthAdjust="spacingAndGlyphs">curve</text>
<text class="h" x="1437" y="66" textLength="153" lengthAdjust="spacingAndGlyphs">Saturation</text>
<text class="h" x="1474" y="109.5" textLength="78.6" lengthAdjust="spacingAndGlyphs">curve</text>
<text class="h" x="1647" y="66" textLength="205" lengthAdjust="spacingAndGlyphs">Interpretation</text>
<text class="h" x="1702" y="109.5" textLength="98" lengthAdjust="spacingAndGlyphs">profile</text>
<text class="h" x="1866" y="87.5" textLength="199" lengthAdjust="spacingAndGlyphs">Classification</text>
<text class="h" x="2086" y="66" textLength="207" lengthAdjust="spacingAndGlyphs">Interpretation</text>
<text class="h" x="2111" y="109.5" textLength="158" lengthAdjust="spacingAndGlyphs">conclusion</text>

<!-- lithology legend -->
<text class="l" fill="#f00" x="78" y="800.8" textLength="58" lengthAdjust="spacingAndGlyphs">GR</text>
<text class="n" fill="#f00" x="28.4" y="845.6" textLength="16" lengthAdjust="spacingAndGlyphs">0</text>
<text class="u" fill="#f00" x="88.6" y="834" textLength="39" lengthAdjust="spacingAndGlyphs">API</text>
<text class="n" fill="#f00" x="135.8" y="845.6" textLength="50.8" lengthAdjust="spacingAndGlyphs">150</text>
<!-- depth legend -->
<text style="font:39px 'Liberation Sans','Noto Sans CJK SC',sans-serif" y="772"><tspan x="186">（</tspan><tspan x="231">m</tspan><tspan x="269">）</tspan></text>
<text class="n" style="font-size:42px" x="200" y="830.6" textLength="96" lengthAdjust="spacingAndGlyphs">1:400</text>
<!-- resistivity legend -->
<text class="l" fill="#f00" x="345" y="709" textLength="96.5" lengthAdjust="spacingAndGlyphs">P40H</text>
<text class="n" fill="#f00" x="309.5" y="753.7" textLength="42" lengthAdjust="spacingAndGlyphs">0.2</text>
<text class="u" fill="#f00" x="351" y="742" textLength="85" lengthAdjust="spacingAndGlyphs">OHM-M</text>
<text class="n" fill="#f00" x="445" y="753.7" textLength="33.5" lengthAdjust="spacingAndGlyphs">20</text>
<text class="n" style="font-size:40px" fill="#00f" x="343" y="795" textLength="99" lengthAdjust="spacingAndGlyphs">A40H</text>
<text class="n" fill="#00f" x="309.5" y="845.6" textLength="42" lengthAdjust="spacingAndGlyphs">0.2</text>
<text class="n" style="font-size:23px" fill="#00f" x="356" y="839" textLength="82" lengthAdjust="spacingAndGlyphs">OHM-M</text>
<text class="n" fill="#00f" x="445" y="845.6" textLength="33.5" lengthAdjust="spacingAndGlyphs">20</text>
<!-- porosity legend -->
<text class="l" fill="#2e8b57" x="559.7" y="709" textLength="84" lengthAdjust="spacingAndGlyphs">CNL</text>
<text class="n" fill="#2e8b57" x="486" y="753.7" textLength="34" lengthAdjust="spacingAndGlyphs">45</text>
<text class="p" fill="#2e8b57" x="588.6" y="750" textLength="25" lengthAdjust="spacingAndGlyphs">%</text>
<text class="n" fill="#2e8b57" x="671.6" y="753.7" textLength="44.8" lengthAdjust="spacingAndGlyphs">-15</text>
<text class="l" fill="#f00" x="558" y="800.8" textLength="86.8" lengthAdjust="spacingAndGlyphs">DEN</text>
<text class="n" fill="#f00" x="488.6" y="845.6" textLength="58.4" lengthAdjust="spacingAndGlyphs">1.95</text>
<text class="u" fill="#f00" x="562" y="834" textLength="77" lengthAdjust="spacingAndGlyphs">G/CM3</text>
<text class="n" fill="#f00" x="655.7" y="845.6" textLength="60.7" lengthAdjust="spacingAndGlyphs">2.95</text>
<!-- gas legend -->
<text class="l" fill="#008000" x="801" y="158" textLength="80.6" lengthAdjust="spacingAndGlyphs">CO2</text>
<text class="n" fill="#008000" x="724.5" y="203.2" textLength="58.2" lengthAdjust="spacingAndGlyphs">0.01</text><text class="n" fill="#008000" x="910" y="203.2" textLength="50" lengthAdjust="spacingAndGlyphs">100</text>
<text class="l" fill="#00f" x="805.6" y="250.3" textLength="71.4" lengthAdjust="spacingAndGlyphs">nC4</text>
<text class="n" fill="#00f" x="724.5" y="295" textLength="58.2" lengthAdjust="spacingAndGlyphs">0.01</text><text class="n" fill="#00f" x="910" y="295" textLength="50" lengthAdjust="spacingAndGlyphs">100</text>
<text class="l" fill="#3366ff" x="812" y="342" textLength="61.5" lengthAdjust="spacingAndGlyphs">iC4</text>
<text class="n" fill="#3366ff" x="724.5" y="387" textLength="58.2" lengthAdjust="spacingAndGlyphs">0.01</text><text class="n" fill="#3366ff" x="910" y="387" textLength="50" lengthAdjust="spacingAndGlyphs">100</text>
<text class="l" fill="#0f0" x="818" y="433.4" textLength="47" lengthAdjust="spacingAndGlyphs">C3</text>
<text class="n" fill="#0f0" x="724.5" y="478.8" textLength="58.2" lengthAdjust="spacingAndGlyphs">0.01</text><text class="p" fill="#0f0" x="829" y="475" textLength="25" lengthAdjust="spacingAndGlyphs">%</text><text class="n" fill="#0f0" x="910" y="478.8" textLength="50" lengthAdjust="spacingAndGlyphs">100</text>
<text class="l" x="818" y="525" textLength="47" lengthAdjust="spacingAndGlyphs">C2</text>
<text class="n" x="724.5" y="570" textLength="58.2" lengthAdjust="spacingAndGlyphs">0.01</text><text class="p" x="829" y="566.6" textLength="25" lengthAdjust="spacingAndGlyphs">%</text><text class="n" x="910" y="570" textLength="50" lengthAdjust="spacingAndGlyphs">100</text>
<text class="l" fill="#008080" x="818" y="617" textLength="47" lengthAdjust="spacingAndGlyphs">C1</text>
<text class="n" fill="#008080" x="724.5" y="662" textLength="58.2" lengthAdjust="spacingAndGlyphs">0.01</text><text class="n" fill="#008080" x="910" y="662" textLength="50" lengthAdjust="spacingAndGlyphs">100</text>
<text class="l" fill="#f00" x="817" y="709" textLength="49" lengthAdjust="spacingAndGlyphs">Tg</text>
<text class="n" fill="#f00" x="724.5" y="753.7" textLength="58.2" lengthAdjust="spacingAndGlyphs">0.01</text><text class="p" fill="#f00" x="829" y="749.7" textLength="25" lengthAdjust="spacingAndGlyphs">%</text><text class="n" fill="#f00" x="910" y="753.7" textLength="50" lengthAdjust="spacingAndGlyphs">100</text>
<text class="l" fill="#f0f" x="804.6" y="800.8" textLength="73.4" lengthAdjust="spacingAndGlyphs">Rop</text>
<text class="n" fill="#f0f" x="724.5" y="845.6" textLength="58.2" lengthAdjust="spacingAndGlyphs">0.01</text><text class="u" fill="#f0f" x="801" y="835" textLength="80" lengthAdjust="spacingAndGlyphs">MIN/M</text><text class="n" fill="#f0f" x="910" y="845.6" textLength="50" lengthAdjust="spacingAndGlyphs">100</text>
<!-- POR legend -->
<text class="l" fill="#00f" x="1012" y="800.8" textLength="85" lengthAdjust="spacingAndGlyphs">POR</text>
<text class="n" fill="#00f" x="966.8" y="845.6" textLength="16" lengthAdjust="spacingAndGlyphs">0</text><text class="p" fill="#00f" x="1041.8" y="841.6" textLength="25.5" lengthAdjust="spacingAndGlyphs">%</text><text class="n" fill="#00f" x="1109.7" y="845.6" textLength="32.6" lengthAdjust="spacingAndGlyphs">30</text>
<!-- saturation legends -->
<text class="l" x="1245" y="707" textLength="46" lengthAdjust="spacingAndGlyphs">Sg</text>
<text class="n" x="1152" y="751" textLength="50.5" lengthAdjust="spacingAndGlyphs">100</text><text class="p" x="1254.6" y="746" textLength="25" lengthAdjust="spacingAndGlyphs">%</text><text class="n" x="1368" y="751" textLength="16" lengthAdjust="spacingAndGlyphs">0</text>
<text class="l" fill="#00f" x="1234.7" y="800.8" textLength="64.8" lengthAdjust="spacingAndGlyphs">Sg2</text>
<text class="n" fill="#00f" x="1152" y="845.6" textLength="50.5" lengthAdjust="spacingAndGlyphs">100</text><text class="p" fill="#00f" x="1254.6" y="841.6" textLength="25" lengthAdjust="spacingAndGlyphs">%</text><text class="n" fill="#00f" x="1368" y="845.6" textLength="16" lengthAdjust="spacingAndGlyphs">0</text>
<text class="l" x="1490.5" y="710" textLength="46.5" lengthAdjust="spacingAndGlyphs">Sg</text>
<text class="n" x="1393" y="753.7" textLength="50" lengthAdjust="spacingAndGlyphs">100</text><text class="p" x="1500" y="750" textLength="25" lengthAdjust="spacingAndGlyphs">%</text><text class="n" x="1618" y="753.7" textLength="16" lengthAdjust="spacingAndGlyphs">0</text>
<text class="l" fill="#f00" x="1480" y="800" textLength="64.6" lengthAdjust="spacingAndGlyphs">Sg1</text>
<text class="n" fill="#f00" x="1393" y="845.6" textLength="50" lengthAdjust="spacingAndGlyphs">100</text><text class="p" fill="#f00" x="1500" y="841.5" textLength="25" lengthAdjust="spacingAndGlyphs">%</text><text class="n" fill="#f00" x="1618" y="845.6" textLength="16" lengthAdjust="spacingAndGlyphs">0</text>
<!-- profile legend -->
<text class="i" style="font-size:43px" x="1696.4" y="775.5" textLength="106.6" lengthAdjust="spacingAndGlyphs">sandy</text>
<text class="i" style="font-size:43px" x="1691.7" y="831" textLength="111.3" lengthAdjust="spacingAndGlyphs">clayey</text>
<!-- class legend -->
<text class="i" x="1901" y="641.5" textLength="122" lengthAdjust="spacingAndGlyphs">Clayey</text>
<text style="font:42px 'Liberation Serif',serif" x="1880" y="731" textLength="98" lengthAdjust="spacing">Class</text>
<text style="font:50px 'Liberation Serif','Noto Serif CJK SC',serif" stroke="#000" stroke-width="1" x="2008" y="733" textLength="26" lengthAdjust="spacingAndGlyphs">Ⅱ</text>
<text style="font:42px 'Liberation Serif',serif" x="1880" y="822" textLength="98" lengthAdjust="spacing">Class</text>
<text style="font:50px 'Liberation Serif','Noto Serif CJK SC',serif" stroke="#000" stroke-width="1" x="2016" y="824" textLength="10" lengthAdjust="spacingAndGlyphs">Ⅰ</text>
<!-- conclusion legend -->
<text class="i" x="2066.7" y="787" textLength="245.8" lengthAdjust="spacingAndGlyphs">Interpretation</text>
<text class="i" x="2093" y="844.5" textLength="188" lengthAdjust="spacingAndGlyphs">conclusion</text>
</svg>
</body></html>
